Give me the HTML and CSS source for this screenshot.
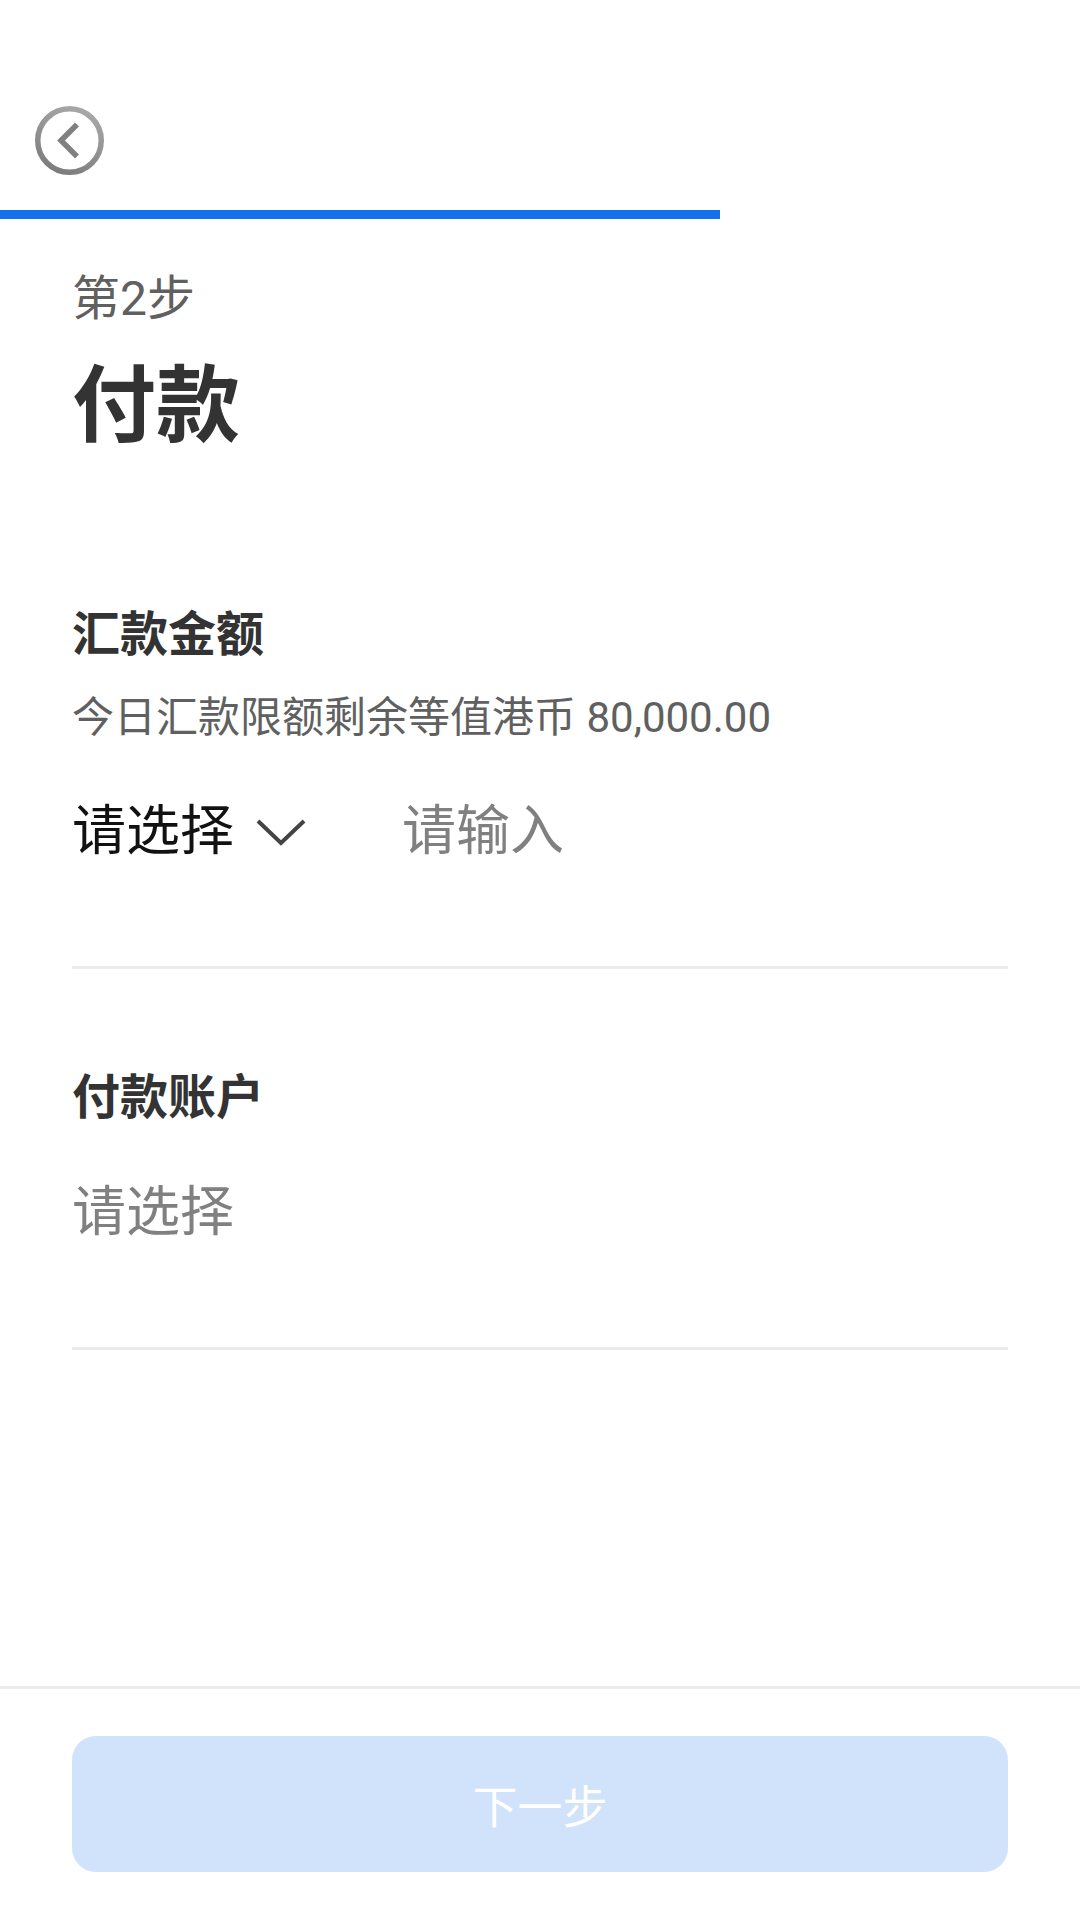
FILE: index.html
```html
<!DOCTYPE html>
<html lang="zh-CN">
<head>
    <meta charset="UTF-8">
    <meta name="viewport" content="width=device-width, initial-scale=1.0">
    <title>付款</title>
    <link rel="stylesheet" href="styles.css">
</head>
<body>

    <div class="page">
        <!-- Top bar -->
        <div class="topbar">
            <svg class="back-icon" width="72" height="72" viewBox="0 0 72 72" fill="none">
                <defs>
                    <linearGradient id="backGrad" x1="0.7" y1="0" x2="0.3" y2="1">
                        <stop offset="0" stop-color="#a8a8a8"/>
                        <stop offset="1" stop-color="#7c7c7c"/>
                    </linearGradient>
                </defs>
                <circle cx="35.500" cy="35.500" r="31.750" stroke="url(#backGrad)" stroke-width="5.500"/>
                <path d="M43 19.500L27 35.500L43 51.500" stroke="#808080" stroke-width="5.500"/>
            </svg>
        </div>

        <!-- Progress -->
        <div class="progress"><div class="progress-fill"></div></div>

        <!-- Heading -->
        <div class="heading">
            <div class="step">第2步</div>
            <h1>付款</h1>
        </div>

        <!-- Amount -->
        <section class="field field-amount">
            <h2>汇款金额</h2>
            <p class="hint">今日汇款限额剩余等值港币 80,000.00</p>
            <div class="inputs">
                <div class="currency">
                    <span class="value">请选择</span>
                    <svg class="chevron" width="50" height="28" viewBox="0 0 50 28" fill="none">
                        <path d="M2 3L25 25L48 3" stroke="#444" stroke-width="4"/>
                    </svg>
                </div>
                <span class="placeholder">请输入</span>
            </div>
        </section>

        <!-- Account -->
        <section class="field field-account">
            <h2>付款账户</h2>
            <div class="inputs">
                <span class="placeholder">请选择</span>
            </div>
        </section>

        <!-- Footer -->
        <div class="footer">
            <button class="next" type="button">下一步</button>
        </div>
    </div>

</body>
</html>
```

FILE: styles.css
```css
/* Global Styles */
* {
    margin: 0;
    padding: 0;
    box-sizing: border-box;
}

body {
    background: #fff;
    font-family: Roboto, "Noto Sans CJK SC", sans-serif;
    color: #333;
}

.page {
    width: 1080px;
    height: 1920px;
    display: flex;
    flex-direction: column;
    overflow: hidden;
}

/* Top bar */
.topbar {
    height: 210px;
    padding: 105px 0 0 34px;
}

.back-icon {
    display: block;
}

/* Progress */
.progress {
    height: 9px;
}

.progress-fill {
    width: 720px;
    height: 100%;
    background: #1570ef;
}

/* Heading */
.heading {
    padding: 52px 72px 0;
}

.step {
    font-size: 48px;
    line-height: 56px;
    color: #606060;
}

h1 {
    font-size: 84px;
    line-height: 112px;
    margin-top: 24px;
    font-weight: 700;
    color: #333;
}

/* Form fields */
.field {
    margin: 0 72px;
    border-bottom: 3px solid #ebebeb;
}

.field-amount {
    margin-top: 142px;
    height: 364px;
}

.field-account {
    margin-top: 99px;
    height: 282px;
}

h2 {
    font-size: 48px;
    line-height: 60px;
    font-weight: 700;
    color: #333;
}

.hint {
    margin-top: 25px;
    font-size: 42px;
    line-height: 56px;
    color: #606060;
}

.inputs {
    display: flex;
    align-items: center;
    margin-top: 42px;
    height: 76px;
    font-size: 54px;
}

.field-account .inputs {
    margin-top: 41px;
}

.currency {
    display: flex;
    align-items: center;
    width: 330px;
    color: #111;
}

.chevron {
    margin-left: 22px;
    margin-top: 12px;
}

.placeholder {
    color: #808080;
}

/* Footer */
.footer {
    margin-top: auto;
    height: 234px;
    padding: 47px 72px 0;
    border-top: 3px solid #ebebeb;
}

.next {
    display: block;
    width: 100%;
    height: 136px;
    border: none;
    border-radius: 24px;
    background: #d1e2fb;
    color: #fff;
    font-family: inherit;
    font-size: 45px;
}
```
